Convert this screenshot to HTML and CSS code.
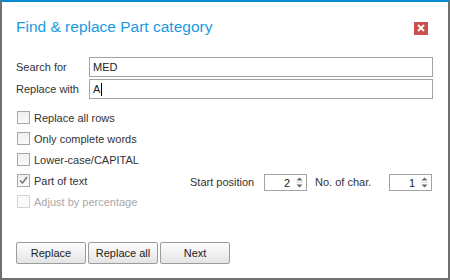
FILE: index.html
```html
<!DOCTYPE html>
<html lang="en">
<head>
  <meta charset="UTF-8" />
  <title>Find &amp; replace Part category</title>
  <link rel="stylesheet" href="styles.css">
</head>
<body>
  <div class="dialog">
    <div class="dialog-head">
      <h1 class="title">Find &amp; replace Part category</h1>
      <button class="close" aria-label="Close">
        <svg width="8" height="8" viewBox="0 0 8 8"><path d="M1 1 L7 7 M7 1 L1 7" stroke="#fff" stroke-width="1.8"/></svg>
      </button>
    </div>

    <div class="fields">
      <div class="field">
        <label class="field-label">Search for</label>
        <div class="input">MED</div>
      </div>
      <div class="field">
        <label class="field-label">Replace with</label>
        <div class="input">A<span class="caret"></span></div>
      </div>
    </div>

    <div class="options">
      <div class="option"><span class="box"></span><span>Replace all rows</span></div>
      <div class="option"><span class="box"></span><span>Only complete words</span></div>
      <div class="option"><span class="box"></span><span>Lower-case/CAPITAL</span></div>
      <div class="option option-part">
        <div class="check">
          <span class="box">
            <svg width="11" height="11" viewBox="0 0 11 11"><path d="M2 5.5 L4.5 8 L9 2" fill="none" stroke="#707070" stroke-width="1.4"/></svg>
          </span>
          <span>Part of text</span>
        </div>
        <span class="spin-label">Start position</span>
        <div class="spin">
          <span class="spin-value">2</span>
          <span class="spin-arrows">
            <svg width="7" height="13" viewBox="0 0 7 13"><path d="M0.5 4.5 L3.5 1.5 L6.5 4.5 Z" fill="#666"/><path d="M0.5 8.5 L3.5 11.5 L6.5 8.5 Z" fill="#666"/><path d="M0 6.5 H7" stroke="#ddd" stroke-width="1"/></svg>
          </span>
        </div>
        <span class="spin-label spin-label-2">No. of char.</span>
        <div class="spin">
          <span class="spin-value">1</span>
          <span class="spin-arrows">
            <svg width="7" height="13" viewBox="0 0 7 13"><path d="M0.5 4.5 L3.5 1.5 L6.5 4.5 Z" fill="#666"/><path d="M0.5 8.5 L3.5 11.5 L6.5 8.5 Z" fill="#666"/><path d="M0 6.5 H7" stroke="#ddd" stroke-width="1"/></svg>
          </span>
        </div>
      </div>
      <div class="option disabled"><span class="box"></span><span>Adjust by percentage</span></div>
    </div>

    <div class="buttons">
      <button class="btn">Replace</button>
      <button class="btn">Replace all</button>
      <button class="btn">Next</button>
    </div>
  </div>
</body>
</html>
```

FILE: styles.css
```css
* {
  box-sizing: border-box;
}
body {
  margin: 0;
  background: #fff;
  font-family: "Liberation Sans", Arial, sans-serif;
  font-size: 11px;
  color: #333;
}
.dialog {
  width: 450px;
  height: 280px;
  border: 2px solid #707070;
  border-top: 2px solid #0b8ad4;
  background: #fff;
  display: flex;
  flex-direction: column;
  padding: 0 15px 0 14px;
}
.dialog-head {
  display: flex;
  align-items: center;
  justify-content: space-between;
  padding-top: 15px;
  height: 35px;
}
.title {
  margin: 0;
  font-weight: normal;
  font-size: 15.5px;
  line-height: 20px;
  color: #1a9ae0;
}
.close {
  width: 14px;
  height: 13px;
  margin: 2px 5px 0 0;
  padding: 0;
  border: none;
  background: #c9504f;
  display: flex;
  align-items: center;
  justify-content: center;
}
.fields {
  margin-top: 20px;
  display: flex;
  flex-direction: column;
  gap: 2px;
}
.field {
  display: flex;
  align-items: center;
}
.field-label {
  width: 73px;
  flex: none;
}
.input {
  flex: 1;
  height: 20px;
  border: 1px solid #a3a3a3;
  padding: 0 3px;
  line-height: 18px;
  color: #222;
  display: flex;
  align-items: center;
}
.caret {
  display: inline-block;
  width: 1px;
  height: 13px;
  background: #000;
  margin-left: 1px;
}
.options {
  margin-top: 8px;
  display: flex;
  flex-direction: column;
}
.option {
  height: 21px;
  display: flex;
  align-items: center;
  padding-left: 1px;
}
.box {
  width: 13px;
  height: 13px;
  border: 1px solid #a8a8a8;
  background: linear-gradient(#f0f0f0, #fafafa);
  margin-right: 4px;
  flex: none;
  display: flex;
  align-items: center;
  justify-content: center;
}
.check {
  width: 173px;
  display: flex;
  align-items: center;
}
.option-part {
  align-items: flex-start;
  padding-top: 4px;
}
.option-part .check {
  height: 13px;
}
.spin-label {
  width: 74px;
  line-height: 17px;
}
.spin-label-2 {
  margin-left: 8px;
}
.spin {
  width: 43px;
  height: 17px;
  border: 1px solid #a3a3a3;
  display: flex;
  align-items: center;
  justify-content: flex-end;
  padding-right: 3px;
  color: #222;
}
.spin-value {
  margin-right: 6px;
}
.spin-arrows {
  display: flex;
}
.disabled {
  color: #a9a9a9;
}
.disabled .box {
  border-color: #d4d4d4;
  background: #fafafa;
}
.buttons {
  margin-top: 30px;
  display: flex;
  gap: 2px;
}
.btn {
  width: 70px;
  height: 22px;
  padding: 0;
  border: 1px solid #9c9c9c;
  border-radius: 2px;
  background: linear-gradient(#fdfdfd, #e4e4e4);
  font-family: "Liberation Sans", Arial, sans-serif;
  font-size: 11px;
  color: #222;
}
```
